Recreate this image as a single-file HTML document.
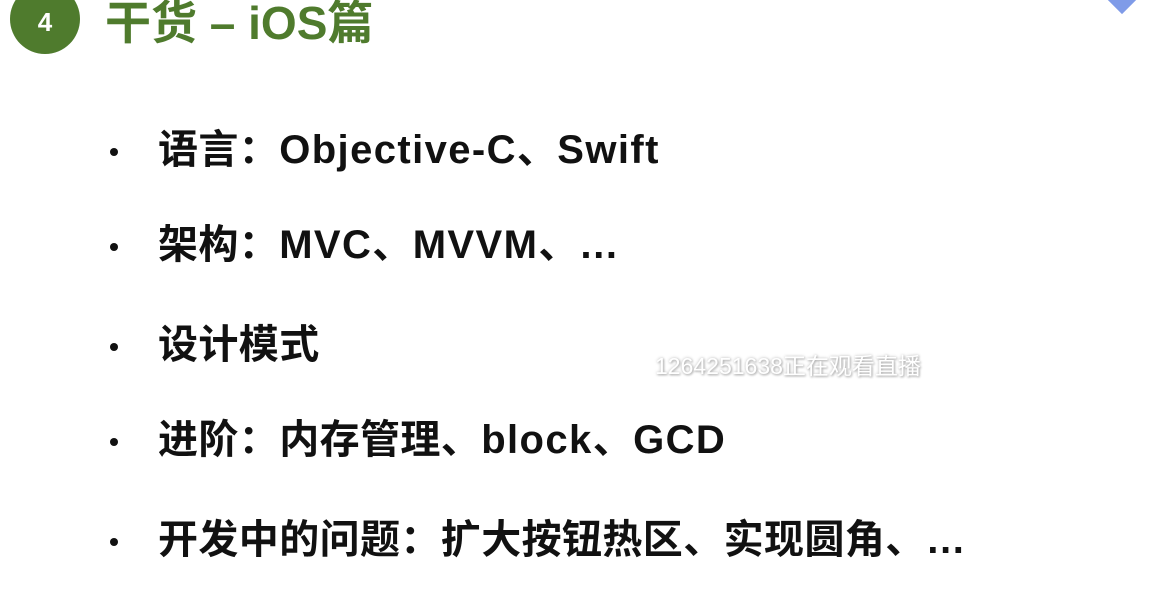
<html><head><style>
body{margin:0;width:1152px;height:591px;background:#fff;position:relative;overflow:hidden;font-family:"Liberation Sans","Noto Sans CJK SC",sans-serif}
.c{position:absolute;left:10px;top:-16px;width:70px;height:70px;border-radius:50%;background:#4f7b2d;color:#fff;font-weight:bold;font-size:26px;text-align:center;line-height:76px}
.t{position:absolute;left:105px;top:-8px;font-size:46px;font-weight:bold;color:#4f7b2d;line-height:62px;white-space:nowrap}
.l{position:absolute;left:158px;font-size:40px;letter-spacing:0.4px;font-weight:bold;color:#111;line-height:44px;white-space:nowrap}
.l span{letter-spacing:1.4px}
.d{position:absolute;left:110px;width:8px;height:8px;border-radius:50%;background:#111}
.w{position:absolute;left:655px;top:347px;font-size:23px;color:#fff;text-shadow:0 0 3px #bbb,1px 1px 2px #aaa;white-space:nowrap}
.g{position:absolute;left:1112px;top:-10px;width:20px;height:20px;background:#7f9be8;transform:rotate(45deg)}
</style></head><body>
<div class="c">4</div>
<div class="t">干货 – iOS篇</div>
<div class="g"></div>
<div class="d" style="top:148px"></div><div class="l" style="top:128px">语言：<span>Objective-C</span>、<span>Swift</span></div>
<div class="d" style="top:243px"></div><div class="l" style="top:223px">架构：<span>MVC</span>、<span>MVVM</span>、…</div>
<div class="d" style="top:343px"></div><div class="l" style="top:323px">设计模式</div>
<div class="d" style="top:438px"></div><div class="l" style="top:418px">进阶：内存管理、<span>block</span>、<span>GCD</span></div>
<div class="d" style="top:538px"></div><div class="l" style="top:518px">开发中的问题：扩大按钮热区、实现圆角、…</div>
<div class="w">1264251638正在观看直播</div>
</body></html>
